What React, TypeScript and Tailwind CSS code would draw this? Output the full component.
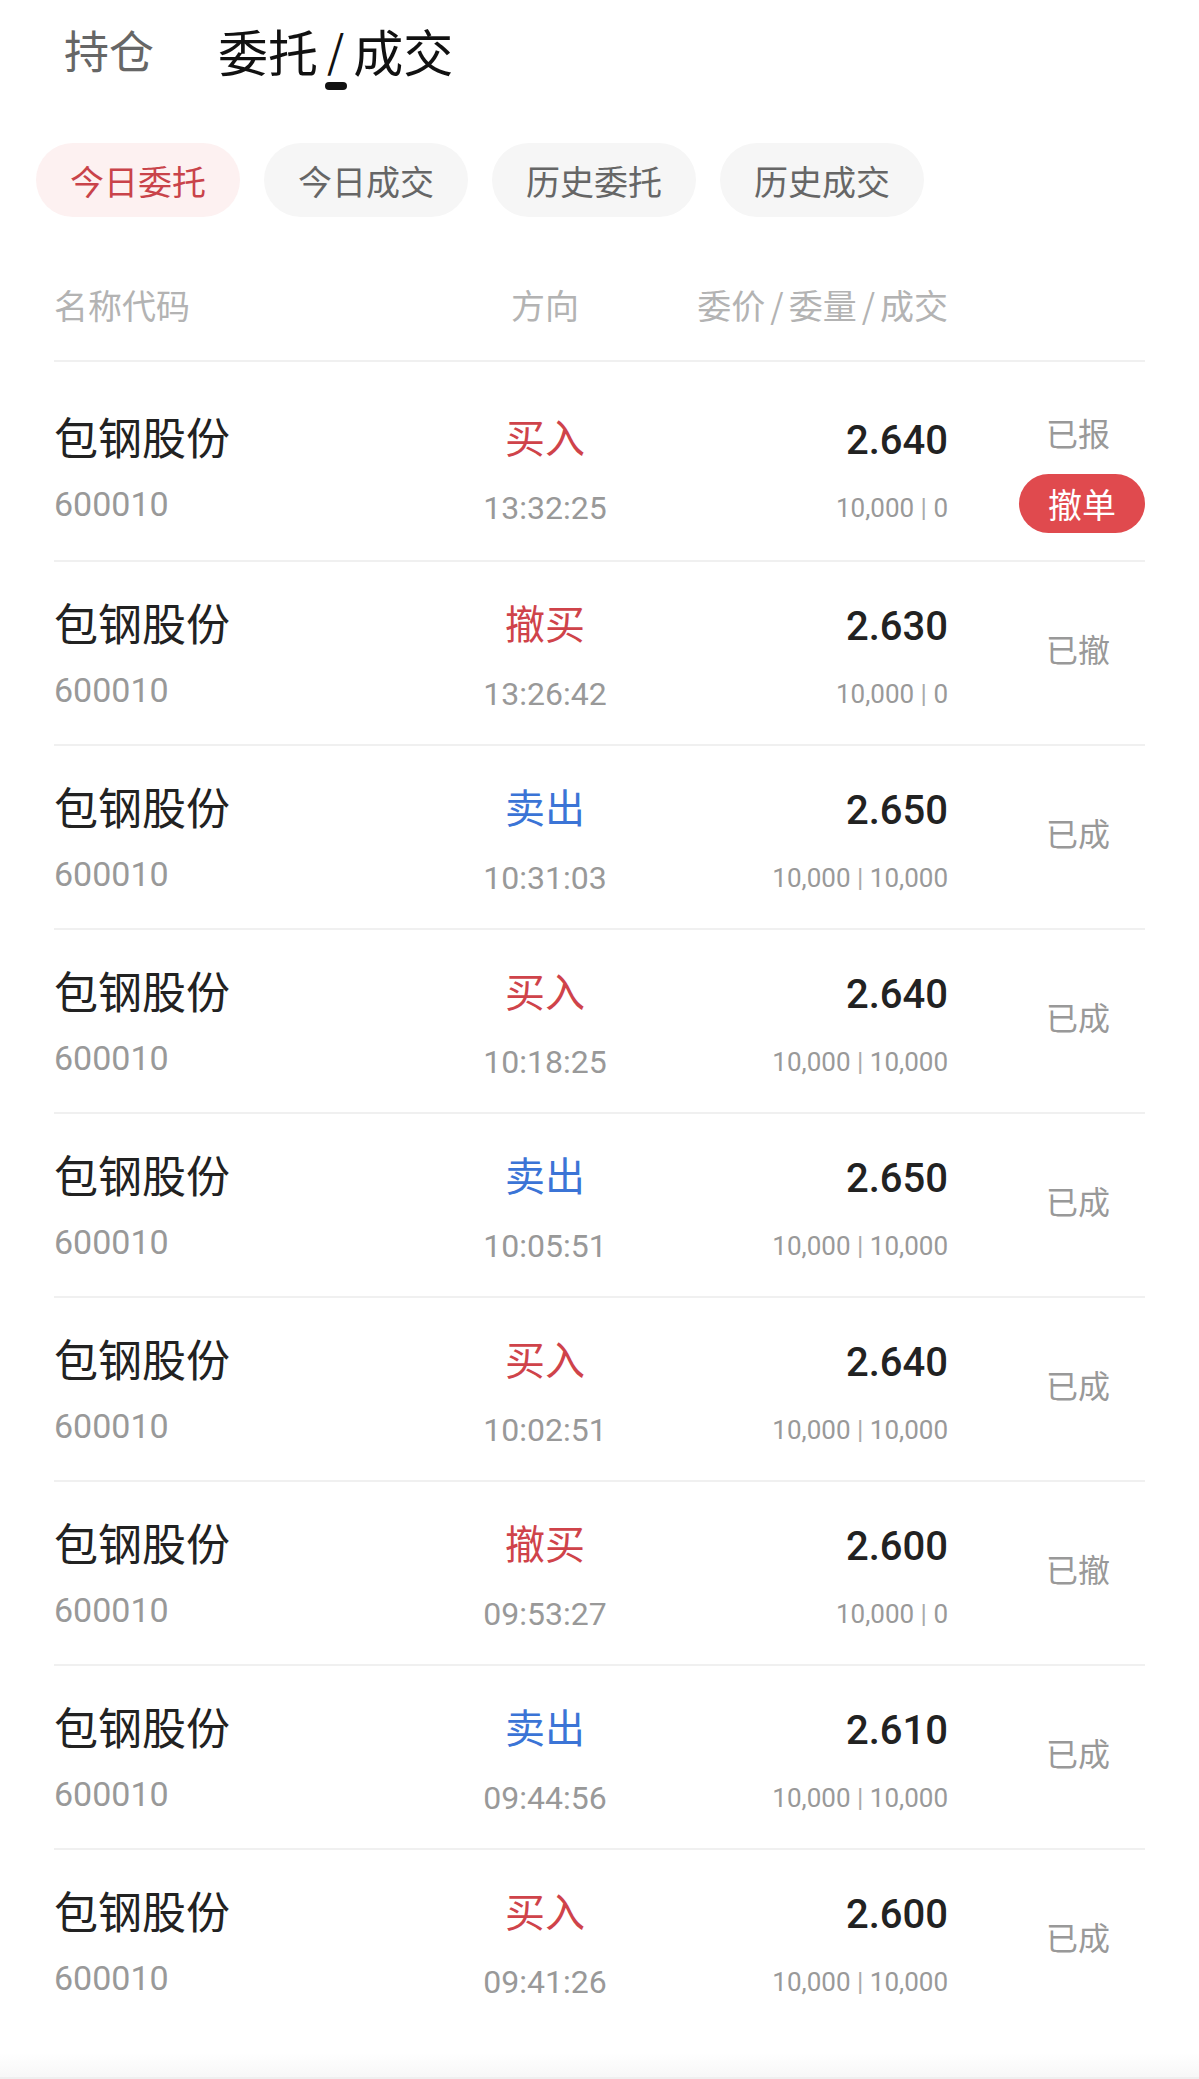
import React from 'react';

type Order = {
  name: string;
  code: string;
  side: '买入' | '卖出' | '撤买';
  time: string;
  price: string;
  qty: string;
  filled: string;
  status: string;
  cancelable?: boolean;
};

const orders: Order[] = [
  { name: '包钢股份', code: '600010', side: '买入', time: '13:32:25', price: '2.640', qty: '10,000', filled: '0', status: '已报', cancelable: true },
  { name: '包钢股份', code: '600010', side: '撤买', time: '13:26:42', price: '2.630', qty: '10,000', filled: '0', status: '已撤' },
  { name: '包钢股份', code: '600010', side: '卖出', time: '10:31:03', price: '2.650', qty: '10,000', filled: '10,000', status: '已成' },
  { name: '包钢股份', code: '600010', side: '买入', time: '10:18:25', price: '2.640', qty: '10,000', filled: '10,000', status: '已成' },
  { name: '包钢股份', code: '600010', side: '卖出', time: '10:05:51', price: '2.650', qty: '10,000', filled: '10,000', status: '已成' },
  { name: '包钢股份', code: '600010', side: '买入', time: '10:02:51', price: '2.640', qty: '10,000', filled: '10,000', status: '已成' },
  { name: '包钢股份', code: '600010', side: '撤买', time: '09:53:27', price: '2.600', qty: '10,000', filled: '0', status: '已撤' },
  { name: '包钢股份', code: '600010', side: '卖出', time: '09:44:56', price: '2.610', qty: '10,000', filled: '10,000', status: '已成' },
  { name: '包钢股份', code: '600010', side: '买入', time: '09:41:26', price: '2.600', qty: '10,000', filled: '10,000', status: '已成' },
];

const filters = ['今日委托', '今日成交', '历史委托', '历史成交'];

const cjk = "font-['Noto_Sans_CJK_SC',sans-serif]";
const num = "font-['Roboto','Noto_Sans_CJK_SC',sans-serif]";

function OrderRow({ o, first }: { o: Order; first: boolean }) {
  const sideColor = o.side === '卖出' ? 'text-[#3b74d6]' : 'text-[#cf434a]';
  return (
    <div className={`flex h-[184px] ${first ? '' : 'border-t-2 border-[#f0f0f0]'}`}>
      <div className="w-[386px] pt-[32px]">
        <div className={`${cjk} text-[44px] leading-[56px] text-[#222]`}>{o.name}</div>
        <div className={`${num} mt-[20px] text-[34px] leading-[40px] text-[#999]`}>{o.code}</div>
      </div>
      <div className="w-[210px] pt-[36px] text-center">
        <div className={`${cjk} text-[40px] leading-[48px] ${sideColor}`}>{o.side}</div>
        <div className={`${num} mt-[28px] text-[32px] leading-[40px] text-[#999]`}>{o.time}</div>
      </div>
      <div className="w-[298px] pt-[41px] text-right">
        <div className={`${num} text-[40px] font-medium leading-[48px] text-[#222]`}>{o.price}</div>
        <div className={`${num} mt-[25px] text-[26px] leading-[36px] text-[#999]`}>
          {o.qty} <span className="text-[#aaa]">|</span> {o.filled}
        </div>
      </div>
      <div className="flex flex-1 justify-end">
        <div
          className={`flex w-[126px] flex-col items-center justify-center ${
            o.cancelable ? 'pt-[8px]' : 'pb-[10px]'
          }`}
        >
          <div className={`${cjk} -ml-[8px] text-[32px] leading-[40px] text-[#999]`}>{o.status}</div>
          {o.cancelable && (
            <button className={`${cjk} mt-[22px] h-[59px] w-[126px] rounded-full bg-[#e04a4e] text-[34px] leading-[59px] text-white`}>
              撤单
            </button>
          )}
        </div>
      </div>
    </div>
  );
}

export default function App() {
  return (
    <div className="flex min-h-[2079px] w-full flex-col bg-white">
      {/* top tabs */}
      <div className="flex h-[104px] items-start pl-[64px] pt-[20px]">
        <span className={`${cjk} text-[45px] leading-[60px] text-[#666]`}>持仓</span>
        <div className="relative ml-[64px]">
          <span className={`${cjk} text-[50px] leading-[60px] text-[#111]`}>
            委托<span className="relative -top-[4px] mx-[9px] text-[44px]">/</span>成交
          </span>
          <div className="absolute left-1/2 top-[62px] h-[8px] w-[22px] -translate-x-1/2 rounded-full bg-[#111]" />
        </div>
      </div>

      {/* filter pills */}
      <div className="mt-[39px] flex gap-[24px] pl-[36px]">
        {filters.map((f, i) => (
          <div
            key={f}
            className={`${cjk} flex h-[74px] w-[204px] items-center justify-center rounded-full text-[34px] ${
              i === 0 ? 'bg-[#fdf1f1] text-[#c9434a]' : 'bg-[#f6f6f6] text-[#666]'
            }`}
          >
            {f}
          </div>
        ))}
      </div>

      <div className="px-[54px]">
        {/* header */}
        <div className={`${cjk} mt-[66px] flex h-[79px] border-b-2 border-[#f0f0f0] text-[34px] leading-[44px] text-[#b3b3b3]`}>
          <div className="w-[386px]">名称代码</div>
          <div className="w-[210px] text-center">方向</div>
          <div className="w-[298px] text-right">
            委价<span className="mx-[5px]">/</span>委量<span className="mx-[5px]">/</span>成交
          </div>
        </div>

        {/* list */}
        <div className="pt-[14px]">
          {orders.map((o, i) => (
            <OrderRow key={i} o={o} first={i === 0} />
          ))}
        </div>
      </div>

      <div className="mt-auto h-[26px] border-b-2 border-[#efefef] bg-gradient-to-b from-white to-[#f7f7f7]" />
    </div>
  );
}
